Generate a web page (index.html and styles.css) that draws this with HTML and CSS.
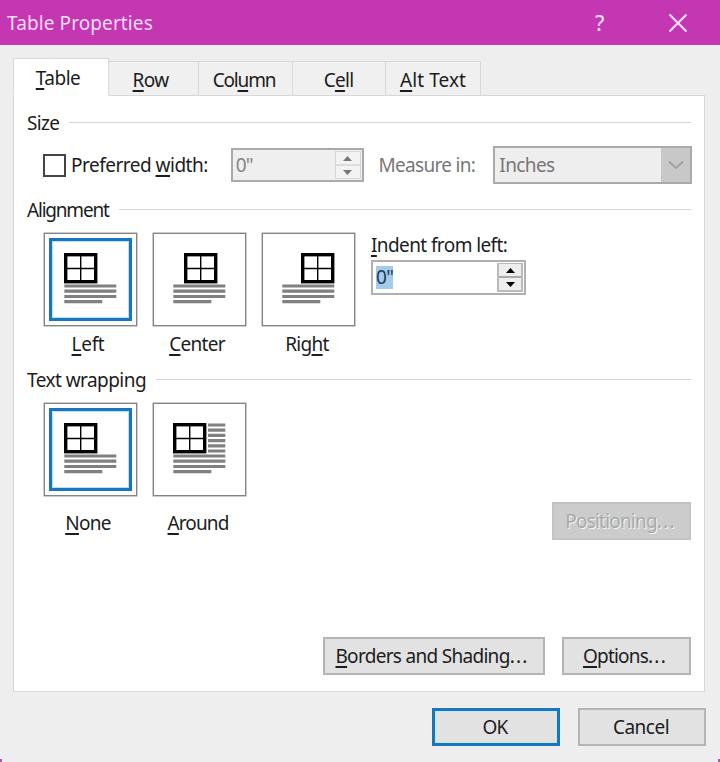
FILE: index.html
```
<!DOCTYPE html>
<html lang="en">
<head>
<meta charset="utf-8">
<title>Table Properties</title>
<link rel="stylesheet" href="styles.css">
</head>
<body>
<svg width="0" height="0" class="defs">
  <defs>
    <g id="grid">
      <rect x="1.7" y="1.7" width="30" height="27" fill="#fff" stroke="#000" stroke-width="3.4"/>
      <path d="M16.7 2v26M2 15.5h29" stroke="#000" stroke-width="1.4"/>
    </g>
    <path id="lines" d="M.3 1.5h52M.3 6.7h52M.3 12h52M.3 17.2h38" stroke="#808080" stroke-width="3.2"/>
    <path id="side" d="M35 2h17.3M35 7.2h17.3M35 12.4h17.3M35 17.6h17.3M35 22.8h17.3M35 28h17.3" stroke="#808080" stroke-width="3.2"/>
  </defs>
</svg>
<div class="dialog">
  <header class="titlebar">
    <h1 class="title">Table Properties</h1>
    <span class="help">?</span>
    <svg class="close" width="20" height="20" viewBox="0 0 20 20"><path d="M1.5 1.5l17 17M18.5 1.5l-17 17"/></svg>
  </header>
  <nav class="tabs">
    <div class="tab active"><span><u>T</u>able</span></div>
    <div class="tab row-tab"><span><u>R</u>ow</span></div>
    <div class="tab col-tab"><span>Col<u>u</u>mn</span></div>
    <div class="tab cell-tab"><span>C<u>e</u>ll</span></div>
    <div class="tab alt-tab"><span><u>A</u>lt Text</span></div>
  </nav>
  <main class="panel">
    <div class="legend size-legend"><span>Size</span></div>
    <div class="size-row">
      <span class="checkbox"></span>
      <span class="pref"><span>Preferred <u>w</u>idth:</span></span>
      <div class="spin disabled">
        <span class="value">0"</span>
        <span class="steps"><i><svg width="9" height="5"><path d="M0 5L4.5 0L9 5z"/></svg></i><i><svg width="9" height="5"><path d="M0 0L4.5 5L9 0z"/></svg></i></span>
      </div>
      <span class="measure"><span>Measure in:</span></span>
      <div class="select"><span class="inches">Inches</span><span class="arrow"><svg width="16" height="10"><path d="M1 1.5l7 6.5 7-6.5"/></svg></span></div>
    </div>
    <div class="legend align-legend"><span>Alignment</span></div>
    <div class="thumbs align-thumbs">
      <div class="option">
        <div class="thumb selected"><svg width="53" height="52"><use href="#grid"/><use href="#lines" y="31.5"/></svg></div>
        <span class="left"><u>L</u>eft</span>
      </div>
      <div class="option">
        <div class="thumb"><svg width="53" height="52"><use href="#grid" x="11"/><use href="#lines" y="31.5"/></svg></div>
        <span><u>C</u>enter</span>
      </div>
      <div class="option">
        <div class="thumb"><svg width="53" height="52"><use href="#grid" x="19"/><use href="#lines" y="31.5"/></svg></div>
        <span class="right">Rig<u>h</u>t</span>
      </div>
      <div class="indent">
        <span class="indent-label"><u>I</u>ndent from left:</span>
        <div class="spin">
          <span class="value"><mark>0"</mark></span>
          <span class="steps"><i><svg width="9" height="5"><path d="M0 5L4.5 0L9 5z"/></svg></i><i><svg width="9" height="5"><path d="M0 0L4.5 5L9 0z"/></svg></i></span>
        </div>
      </div>
    </div>
    <div class="legend wrap-legend"><span>Text wrapping</span></div>
    <div class="thumbs wrap-thumbs">
      <div class="option">
        <div class="thumb selected"><svg width="53" height="52"><use href="#grid"/><use href="#lines" y="31.5"/></svg></div>
        <span><u>N</u>one</span>
      </div>
      <div class="option">
        <div class="thumb"><svg width="53" height="52"><use href="#grid"/><use href="#side"/><use href="#lines" y="31.5"/></svg></div>
        <span class="around"><u>A</u>round</span>
      </div>
      <div class="button positioning"><span>Positioning<span class="dots">...</span></span></div>
    </div>
    <div class="panel-buttons">
      <div class="button borders"><span><u>B</u>orders and Shading<span class="dots">...</span></span></div>
      <div class="button options"><span><u>O</u>ptions<span class="dots">...</span></span></div>
    </div>
  </main>
  <footer class="footer">
    <div class="button ok"><span>OK</span></div>
    <div class="button cancel"><span>Cancel</span></div>
  </footer>
  <span class="corner corner-left"></span>
  <span class="corner corner-right"></span>
</div>
</body>
</html>
```
FILE: styles.css
```
* { box-sizing: border-box; }
body {
  margin: 0;
  font-family: "Noto Sans", "Open Sans", sans-serif;
  font-size: 19px;
  line-height: 26px;
  letter-spacing: -0.7px;
  color: #1c1c20;
  white-space: nowrap;
}
u { text-decoration-thickness: 1.5px; text-underline-offset: 3px; text-decoration-skip-ink: none; }
.defs { display: block; }
.dialog { position: relative; width: 720px; height: 762px; background: #eee; overflow: hidden; }
.corner { position: absolute; bottom: 0; width: 2px; height: 3px; background: #a85ca6; }
.corner-left { left: 0; }
.corner-right { right: 0; }
.titlebar {
  display: flex;
  align-items: center;
  height: 45px;
  padding: 0 32px 0 7px;
  background: #c436b2;
  color: #fbdcf8;
}
.title { margin: 0; font-size: 19px; font-weight: 400; flex: 1; letter-spacing: 0.1px; }
.help { font-size: 21px; font-weight: 500; width: 73px; }
.close { fill: none; stroke: #fbdcf8; stroke-width: 2.2; }
.tabs { position: relative; display: flex; align-items: flex-end; height: 51px; padding: 13px 0 0 13px; }
.tab {
  display: flex;
  align-items: center;
  justify-content: center;
  height: 35px;
  padding-top: 3px;
  background: #f0f0f0;
  border: 1px solid #d9d9d9;
  border-left: 0;
}
.tab.active { z-index: 1; width: 96px; height: 38px; padding: 2px 6px 0 0; background: #fff; border-left: 1px solid #d9d9d9; border-bottom-color: #fff; letter-spacing: -0.5px; }
.row-tab { width: 90px; padding-right: 6px; }
.col-tab { width: 94px; padding-right: 3px; letter-spacing: -1.2px; }
.cell-tab { width: 93px; padding-right: 1px; }
.alt-tab { width: 95px; letter-spacing: 0.1px; }
.panel {
  width: 692px;
  height: 597px;
  margin: -1px 0 0 13px;
  padding: 14px 13px 0;
  background: #fff;
  border: 1px solid #d7d7d7;
}
.legend { display: flex; align-items: center; height: 26px; gap: 10px; }
.legend::after { content: ""; flex: 1; height: 1px; background: #d5d5d5; margin-bottom: 2px; }
.size-row { display: flex; align-items: center; height: 38px; margin: 10px -1px 0 0; padding-left: 16px; }
.checkbox { width: 23px; height: 23px; border: 2px solid #444; }
.pref { width: 165px; padding-left: 5px; letter-spacing: -0.5px; }
.spin { display: flex; width: 133px; height: 34px; border: 2px solid #b0b0b0; background: #fff; }
.spin .value { flex: 1; padding: 2px 0 0 3px; }
.steps { display: flex; flex-direction: column; width: 26px; margin: 1px 1px 1px 0; background: #eee; border: 2px solid #bbb; border-top-width: 1px; }
.steps i { flex: 1; display: flex; align-items: center; justify-content: center; }
.steps i + i { border-top: 2px solid #aaa; }
.steps path { fill: #000; }
.spin.disabled { background: #efefef; color: #858585; border-color: #aaa; }
.disabled .steps { border: 1px solid #d6d6d6; background: #f3f3f3; }
.disabled .steps i + i { border-top-color: #dcdcdc; }
.disabled .steps path { fill: #777; }
.measure { width: 130px; padding-left: 15px; color: #777; }
.select { display: flex; width: 199px; height: 38px; border: 2px solid #aaa; background: #eee; color: #777; align-items: center; }
.inches { flex: 1; padding-left: 4px; letter-spacing: -0.6px; }
.arrow { display: flex; align-items: center; justify-content: center; width: 29px; height: 34px; background: #c8c8c8; }
.arrow path { fill: none; stroke: #a2a2a2; stroke-width: 2; }
.align-legend { margin-top: 13px; letter-spacing: -1.2px; }
.thumbs { display: flex; gap: 16px; padding-left: 17px; margin-top: 10px; height: 124px; }
.option { display: flex; flex-direction: column; align-items: center; gap: 5px; width: 93px; }
.option > span { margin-right: 5px; }
.option > .left { letter-spacing: -0.3px; }
.option > .right { margin-right: 3px; }
.option > .around { letter-spacing: -0.9px; margin-right: 3px; }
.thumb { flex: none; width: 93px; height: 93px; padding: 19px 0 0 19px; border: 1px solid #858585; background: #fff; box-shadow: 0 0 0 .5px #999; }
.thumb svg { display: block; }
.thumb.selected { padding: 4px; }
.selected svg { box-sizing: content-box; padding: 12px 12px 13px 12px; border: 3px solid #1776bc; box-shadow: inset 0 0 0 1px #b5e3fb; }
.indent { display: flex; flex-direction: column; letter-spacing: -0.6px; }
.indent-label { height: 27px; line-height: 24px; }
.indent .spin { width: 155px; height: 35px; }
mark { display: inline-block; height: 23px; line-height: 23px; color: #1c3a58; background: #a4cbe9; }
.wrap-legend { margin-top: 10px; letter-spacing: -0.55px; }
.wrap-thumbs { height: 137px; }
.wrap-thumbs .option { gap: 14px; }
.button { display: flex; align-items: center; justify-content: center; height: 38px; border: 2px solid #b4b4b4; background: #e2e2e2; }
.dots { letter-spacing: 1.2px; }
.positioning { width: 139px; margin: 99px 0 0 auto; padding-right: 2px; background: #ccc; border-color: #c3c3c3; color: #aaa; text-shadow: 1px 1px 0 #f4f4f4; letter-spacing: -0.8px; }
.panel-buttons { display: flex; justify-content: flex-end; gap: 17px; margin-top: 97px; }
.borders { width: 222px; padding-right: 4px; letter-spacing: -0.7px; }
.options { width: 129px; padding-right: 3px; letter-spacing: -0.8px; }
.footer { display: flex; justify-content: flex-end; gap: 18px; padding: 16px 14px 0 0; }
.footer .button { width: 128px; }
.footer .ok { border: 3px solid #1776bc; padding-right: 2px; box-shadow: inset 0 0 0 1px #c5e7fa; }
.cancel { padding-right: 2px; letter-spacing: -0.5px; }
```
